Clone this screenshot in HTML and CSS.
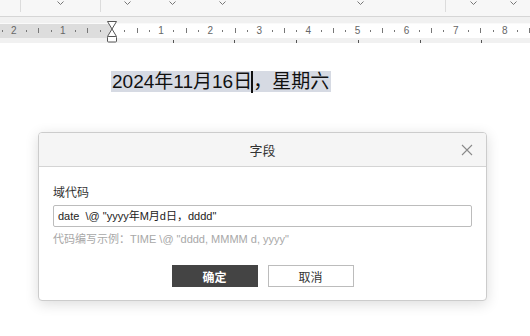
FILE: index.html
```html
<!DOCTYPE html>
<html lang="zh-CN">
<head>
    <meta charset="UTF-8">
    <title>字段</title>
    <link rel="stylesheet" href="styles.css">
</head>
<body>
    <div class="Toolbar">
        <span class="Toolbar-sep" style="left:20px"></span>
        <span class="Toolbar-sep" style="left:100px"></span>
        <span class="Toolbar-sep" style="left:445px"></span>
        <svg class="Toolbar-caret" style="left:57px" width="7" height="5" viewBox="0 0 7 5"><polyline points="0.5,0.5 3.5,3.5 6.5,0.5"/></svg>
        <svg class="Toolbar-caret" style="left:124px" width="7" height="5" viewBox="0 0 7 5"><polyline points="0.5,0.5 3.5,3.5 6.5,0.5"/></svg>
        <svg class="Toolbar-caret" style="left:169px" width="7" height="5" viewBox="0 0 7 5"><polyline points="0.5,0.5 3.5,3.5 6.5,0.5"/></svg>
        <svg class="Toolbar-caret" style="left:219px" width="7" height="5" viewBox="0 0 7 5"><polyline points="0.5,0.5 3.5,3.5 6.5,0.5"/></svg>
        <svg class="Toolbar-caret" style="left:357px" width="7" height="5" viewBox="0 0 7 5"><polyline points="0.5,0.5 3.5,3.5 6.5,0.5"/></svg>
        <svg class="Toolbar-caret" style="left:470px" width="7" height="5" viewBox="0 0 7 5"><polyline points="0.5,0.5 3.5,3.5 6.5,0.5"/></svg>
        <svg class="Toolbar-caret" style="left:510px" width="7" height="5" viewBox="0 0 7 5"><polyline points="0.5,0.5 3.5,3.5 6.5,0.5"/></svg>
    </div>

    <div class="Ruler">
        <div class="Ruler-band" data-js="ruler"></div>
        <div class="Ruler-tabs" data-js="tabs"></div>
        <svg class="Ruler-indent" width="12" height="22" viewBox="0 0 12 22">
            <path d="M1.5 0.5 H10.5 L6 8 L10.5 15.5 H1.5 L6 8 Z"/>
            <rect x="1.5" y="15.5" width="9" height="5.5" rx="1"/>
        </svg>
    </div>

    <div class="Doc">
        <p class="Doc-line"><span class="Doc-sel">2024年11月16日<span class="Doc-caret"></span>，星期六</span></p>
    </div>

    <div class="Dialog">
        <div class="Dialog-head">
            <span class="Dialog-title">字段</span>
            <svg class="Dialog-close" width="12" height="12" viewBox="0 0 12 12"><path d="M1 1 L11 11 M11 1 L1 11"/></svg>
        </div>
        <div class="Dialog-body">
            <div class="Field-label">域代码</div>
            <div class="Field-input">date  \@ "yyyy年M月d日，dddd"</div>
            <div class="Field-hint">代码编写示例：TIME \@ "dddd, MMMM d, yyyy"</div>
            <div class="Dialog-actions">
                <button class="Btn Btn--primary">确定</button>
                <button class="Btn">取消</button>
            </div>
        </div>
    </div>

    <script>
        var ruler = document.querySelector('[data-js="ruler"]'),
            tabs = document.querySelector('[data-js="tabs"]'),
            origin = 112,
            unit = 49.1;

        function mark(parent, cls, x, text) {
            var el = document.createElement('span');
            el.className = cls;
            el.style.left = x + 'px';
            if (text) { el.textContent = text; }
            parent.appendChild(el);
        }

        for (var n = -3; n <= 8; n++) {
            var base = origin + n * unit;
            if (n !== 0 && n > -3) { mark(ruler, 'Ruler-num', base, Math.abs(n)); }
            mark(ruler, 'Ruler-tick', base + unit * 0.25);
            mark(ruler, 'Ruler-tick Ruler-tick--mid', base + unit * 0.5);
            mark(ruler, 'Ruler-tick', base + unit * 0.75);
        }

        // default tab stops
        for (var t = 1; t <= 6; t++) {
            mark(tabs, 'Ruler-tab', 111 + t * 61.7);
        }
    </script>
</body>
</html>
```

FILE: styles.css
```css
html,
body {
    margin: 0;
    background: #ffffff;
    height: 100%;
    overflow: hidden;
}

body {
    font-family: "Liberation Sans", "Noto Sans CJK SC", sans-serif;
    position: relative;
}

.Toolbar {
    position: relative;
    height: 16px;
    background: #f7f7f7;
    border-bottom: 1px solid #d6d6d6;
}

.Toolbar-sep {
    position: absolute;
    top: 0;
    width: 1px;
    height: 12px;
    background: #dcdcdc;
}

.Toolbar-caret {
    position: absolute;
    top: 1px;
    fill: none;
    stroke: #777777;
    stroke-width: 1;
}

.Ruler {
    position: relative;
    background: #f1f1f1;
    padding-top: 6px;
    height: 20px;
}

.Ruler-band {
    position: relative;
    height: 14px;
    border-top: 1px solid #fafafa;
    background: linear-gradient(to right, #dddddd 0, #dddddd 112px, #ffffff 112px);
    overflow: hidden;
}

.Ruler-num {
    position: absolute;
    top: 1px;
    width: 10px;
    margin-left: -5px;
    text-align: center;
    font-size: 10px;
    line-height: 12px;
    color: #666666;
}

.Ruler-tick {
    position: absolute;
    top: 6px;
    width: 1px;
    height: 2px;
    background: #777777;
}

.Ruler-tick--mid {
    top: 4px;
    height: 5px;
}

.Ruler-tabs {
    position: relative;
    height: 6px;
}

.Ruler-tab {
    position: absolute;
    top: 2px;
    width: 1px;
    height: 3px;
    background: #555555;
}

.Ruler-indent {
    position: absolute;
    left: 106px;
    top: 4px;
    fill: #ffffff;
    stroke: #555555;
    stroke-width: 1;
}

.Doc {
    padding: 27px 0 0 111px;
}

.Doc-line {
    margin: 0;
    font-size: 19px;
    line-height: 23px;
    color: #111111;
}

.Doc-sel {
    background: #d6dae3;
    padding: 0 2px 0 1px;
}

.Doc-caret {
    display: inline-block;
    width: 2px;
    height: 22px;
    background: #111111;
    vertical-align: -5px;
    margin-left: -1px;
}

.Dialog {
    position: absolute;
    left: 38px;
    top: 132px;
    width: 447px;
    background: #ffffff;
    border: 1px solid #cccccc;
    border-radius: 4px;
    box-shadow: 0 3px 14px rgba(0, 0, 0, 0.14);
    overflow: hidden;
}

.Dialog-head {
    position: relative;
    height: 33px;
    background: #f5f5f5;
    border-bottom: 1px solid #d4d4d4;
    display: flex;
    align-items: center;
    justify-content: center;
}

.Dialog-title {
    font-size: 13px;
    color: #333333;
}

.Dialog-close {
    position: absolute;
    right: 13px;
    top: 11px;
    fill: none;
    stroke: #8a8a8a;
    stroke-width: 1.1;
}

.Dialog-body {
    padding: 18px 14px 13px 14px;
}

.Field-label {
    font-size: 12px;
    line-height: 16px;
    color: #333333;
}

.Field-input {
    margin-top: 4px;
    height: 20px;
    border: 1px solid #bcbcbc;
    border-radius: 2px;
    padding: 0 4px;
    font-size: 11px;
    line-height: 20px;
    color: #222222;
    white-space: pre;
}

.Field-hint {
    margin-top: 4px;
    font-size: 11px;
    line-height: 16px;
    color: #a8a8a8;
}

.Dialog-actions {
    display: flex;
    justify-content: center;
    gap: 10px;
    margin-top: 18px;
}

.Btn {
    width: 86px;
    height: 22px;
    padding: 0;
    border: 1px solid #bcbcbc;
    background: #ffffff;
    color: #333333;
    font-family: "Liberation Sans", "Noto Sans CJK SC", sans-serif;
    font-size: 12px;
}

.Btn--primary {
    background: #444444;
    border-color: #444444;
    color: #ffffff;
    font-weight: bold;
}
```
